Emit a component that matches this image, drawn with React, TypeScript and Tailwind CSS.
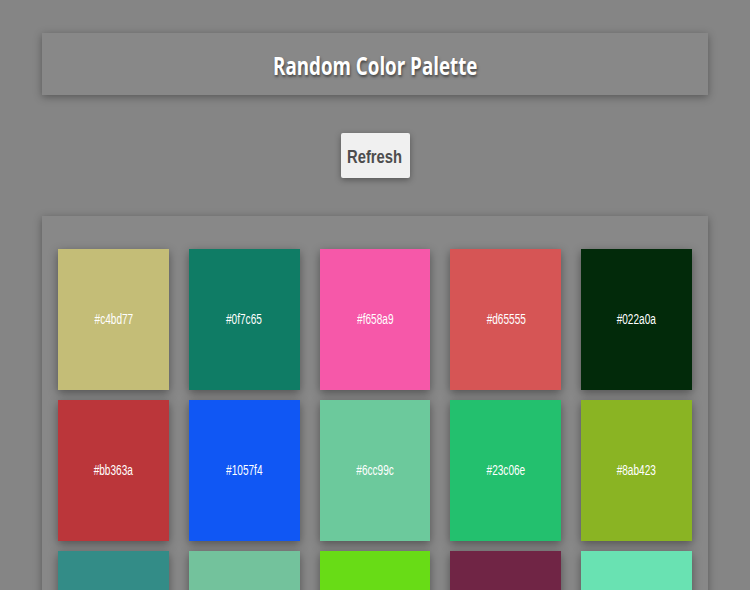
const colors = [
  "#c4bd77", "#0f7c65", "#f658a9", "#d65555", "#022a0a",
  "#bb363a", "#1057f4", "#6cc99c", "#23c06e", "#8ab423",
  "#338c87", "#73c29c", "#68dc16", "#702545", "#69e2b2",
];

export default function App() {
  return (
    <div className="min-h-screen bg-[#858585] px-[42px] pt-[33px] font-['Liberation_Sans',sans-serif]">
      <header className="flex h-[62px] items-center justify-center bg-[#888888] pt-1 shadow-[0_2px_8px_rgba(0,0,0,0.35)]">
        <h1 className="inline-block scale-x-[0.75] font-['Open_Sans',sans-serif] text-[25px] font-bold text-white [text-shadow:1px_2px_3px_rgba(0,0,0,0.5)]">
          Random Color Palette
        </h1>
      </header>

      <div className="flex justify-center py-[38px]">
        <button className="flex h-[45px] w-[69px] items-center justify-center rounded-[2px] bg-[#f0f0f0] pt-[3px] shadow-[0_2px_6px_rgba(0,0,0,0.35)]">
          <span className="inline-block scale-x-[0.82] text-[18px] font-bold text-[#4d4d4d]">Refresh</span>
        </button>
      </div>

      <section className="bg-[#888888] px-4 pt-[33px] pb-8 shadow-[0_2px_8px_rgba(0,0,0,0.35)]">
        <div className="grid grid-cols-5 gap-x-5 gap-y-[10px]">
          {colors.map((c) => (
            <div
              key={c}
              className="flex h-[141px] items-center justify-center shadow-[0_3px_9px_rgba(0,0,0,0.4)]"
              style={{ backgroundColor: c }}
            >
              <span className="inline-block scale-x-[0.72] text-[14px] text-white">{c}</span>
            </div>
          ))}
        </div>
      </section>
    </div>
  );
}
